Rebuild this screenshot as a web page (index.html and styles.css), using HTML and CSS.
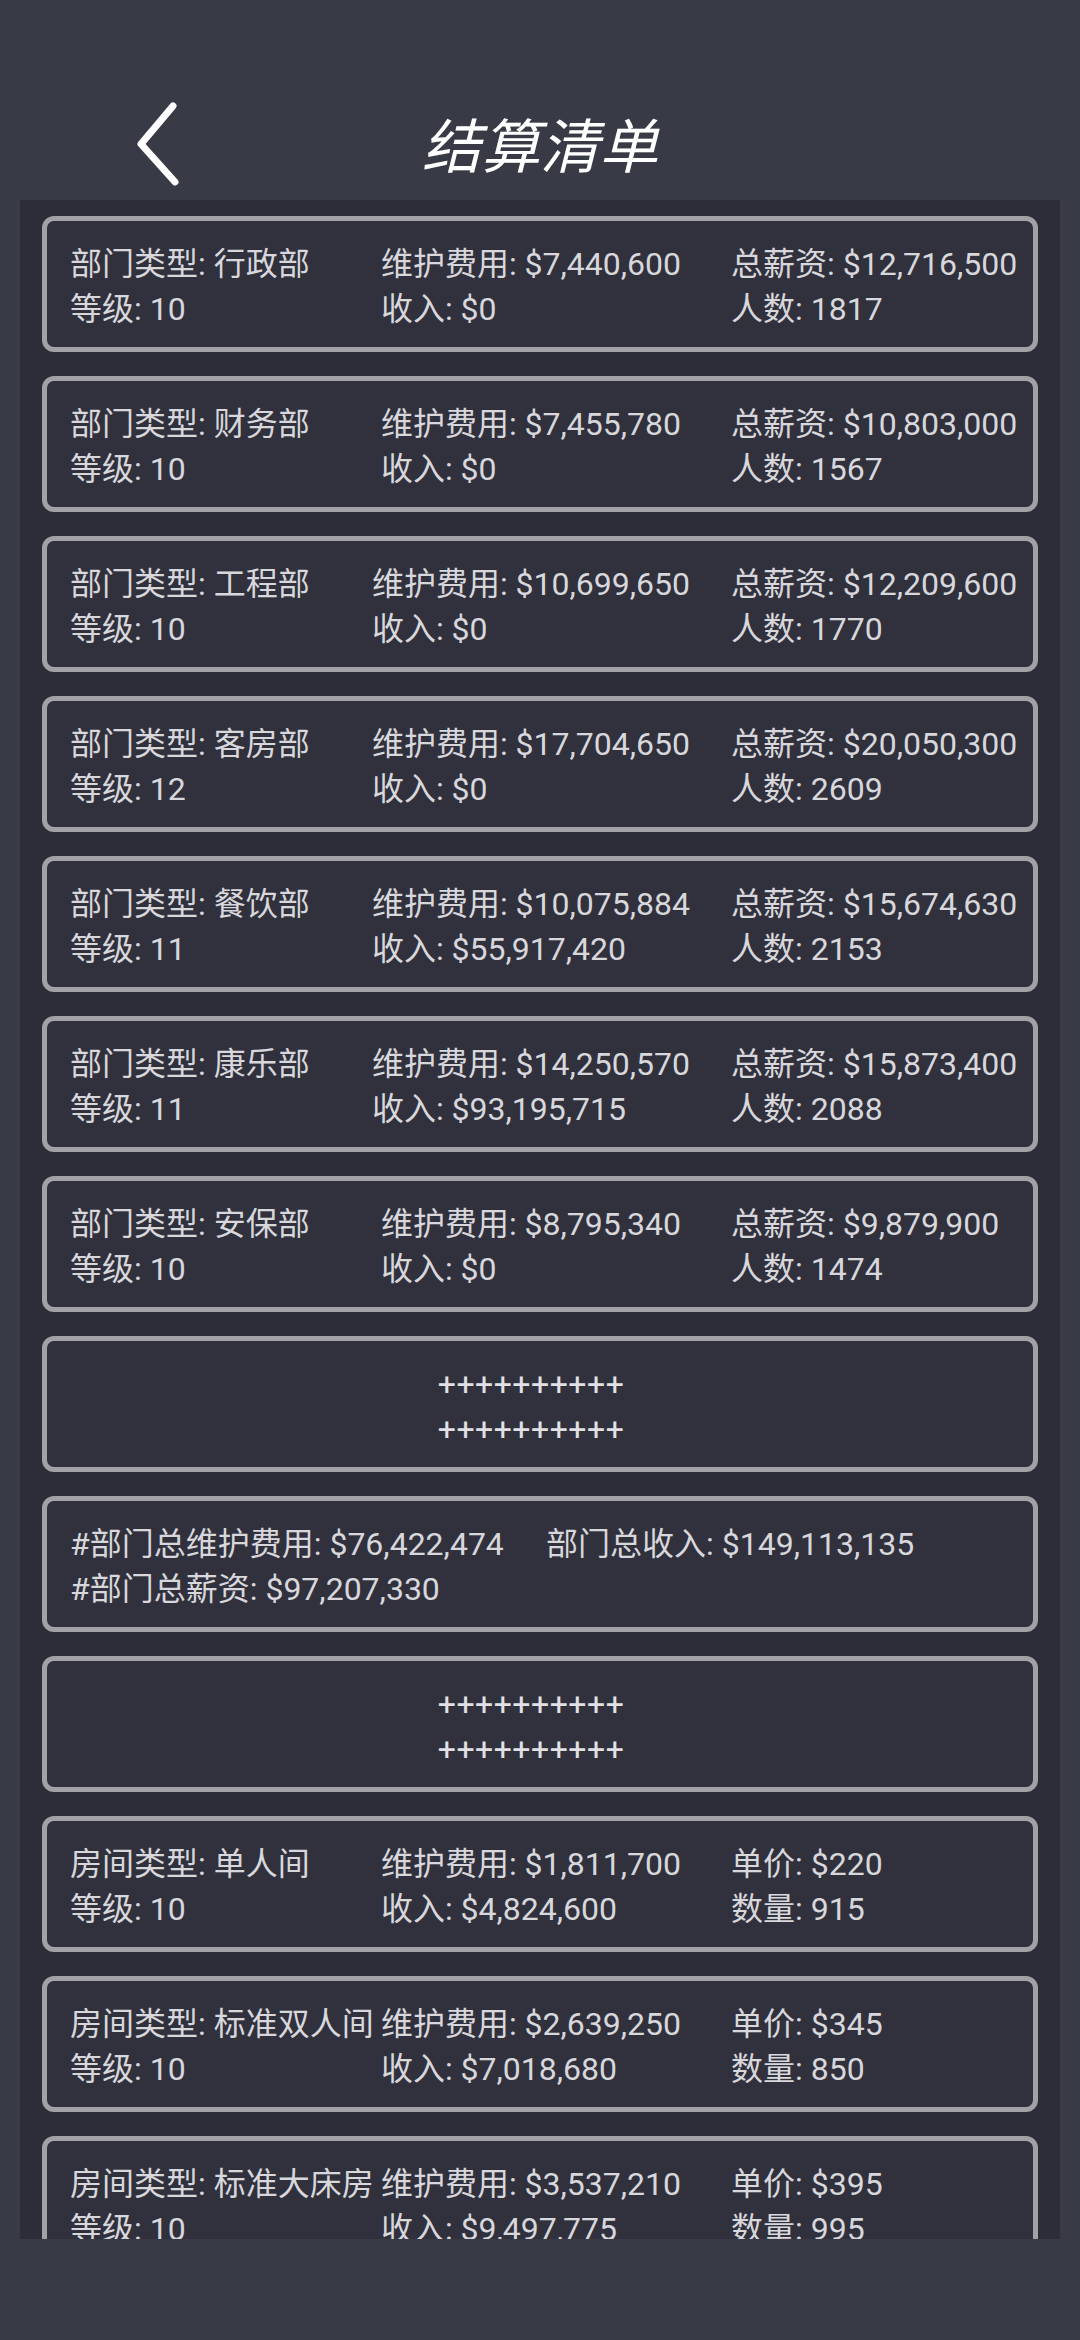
FILE: index.html
```html
<!DOCTYPE html>
<html lang="zh-CN">
<head>
  <meta charset="UTF-8">
  <meta name="viewport" content="width=device-width, initial-scale=1.0">
  <title>结算清单</title>
  <link rel="stylesheet" href="styles.css">
</head>
<body>
  <header class="topbar">
    <div class="back">
      <svg width="56" height="96" viewBox="0 0 56 96">
        <polyline points="42,12 10,50 44,88" fill="none" stroke="#ffffff" stroke-width="7" stroke-linecap="round" stroke-linejoin="round"/>
      </svg>
    </div>
    <h1>结算清单</h1>
    <div></div>
  </header>

  <div class="panel">
    <div class="card">
      <div class="cols">
        <div class="col"><p>部门类型: 行政部</p><p>等级: 10</p></div>
        <div class="col mid"><p>维护费用: $7,440,600</p><p>收入: $0</p></div>
        <div class="col"><p>总薪资: $12,716,500</p><p>人数: 1817</p></div>
      </div>
    </div>
    <div class="card">
      <div class="cols">
        <div class="col"><p>部门类型: 财务部</p><p>等级: 10</p></div>
        <div class="col mid"><p>维护费用: $7,455,780</p><p>收入: $0</p></div>
        <div class="col"><p>总薪资: $10,803,000</p><p>人数: 1567</p></div>
      </div>
    </div>
    <div class="card">
      <div class="cols">
        <div class="col"><p>部门类型: 工程部</p><p>等级: 10</p></div>
        <div class="col mid"><p>维护费用: $10,699,650</p><p>收入: $0</p></div>
        <div class="col"><p>总薪资: $12,209,600</p><p>人数: 1770</p></div>
      </div>
    </div>
    <div class="card">
      <div class="cols">
        <div class="col"><p>部门类型: 客房部</p><p>等级: 12</p></div>
        <div class="col mid"><p>维护费用: $17,704,650</p><p>收入: $0</p></div>
        <div class="col"><p>总薪资: $20,050,300</p><p>人数: 2609</p></div>
      </div>
    </div>
    <div class="card">
      <div class="cols">
        <div class="col"><p>部门类型: 餐饮部</p><p>等级: 11</p></div>
        <div class="col mid"><p>维护费用: $10,075,884</p><p>收入: $55,917,420</p></div>
        <div class="col"><p>总薪资: $15,674,630</p><p>人数: 2153</p></div>
      </div>
    </div>
    <div class="card">
      <div class="cols">
        <div class="col"><p>部门类型: 康乐部</p><p>等级: 11</p></div>
        <div class="col mid"><p>维护费用: $14,250,570</p><p>收入: $93,195,715</p></div>
        <div class="col"><p>总薪资: $15,873,400</p><p>人数: 2088</p></div>
      </div>
    </div>
    <div class="card">
      <div class="cols">
        <div class="col"><p>部门类型: 安保部</p><p>等级: 10</p></div>
        <div class="col mid"><p>维护费用: $8,795,340</p><p>收入: $0</p></div>
        <div class="col"><p>总薪资: $9,879,900</p><p>人数: 1474</p></div>
      </div>
    </div>

    <div class="card">
      <div class="cols">
        <div class="col"></div>
        <div class="col mid plus"><p>++++++++++</p><p>++++++++++</p></div>
        <div class="col"></div>
      </div>
    </div>

    <div class="card">
      <div class="totals">
        <p>#部门总维护费用: $76,422,474</p>
        <p>部门总收入: $149,113,135</p>
        <p>#部门总薪资: $97,207,330</p>
      </div>
    </div>

    <div class="card">
      <div class="cols">
        <div class="col"></div>
        <div class="col mid plus"><p>++++++++++</p><p>++++++++++</p></div>
        <div class="col"></div>
      </div>
    </div>

    <div class="card">
      <div class="cols">
        <div class="col"><p>房间类型: 单人间</p><p>等级: 10</p></div>
        <div class="col mid"><p>维护费用: $1,811,700</p><p>收入: $4,824,600</p></div>
        <div class="col"><p>单价: $220</p><p>数量: 915</p></div>
      </div>
    </div>
    <div class="card">
      <div class="cols">
        <div class="col"><p>房间类型: 标准双人间</p><p>等级: 10</p></div>
        <div class="col mid"><p>维护费用: $2,639,250</p><p>收入: $7,018,680</p></div>
        <div class="col"><p>单价: $345</p><p>数量: 850</p></div>
      </div>
    </div>
    <div class="card">
      <div class="cols">
        <div class="col"><p>房间类型: 标准大床房</p><p>等级: 10</p></div>
        <div class="col mid"><p>维护费用: $3,537,210</p><p>收入: $9,497,775</p></div>
        <div class="col"><p>单价: $395</p><p>数量: 995</p></div>
      </div>
    </div>
  </div>
</body>
</html>
```

FILE: styles.css
```css
body {
  margin: 0;
  width: 1080px;
  height: 2340px;
  background-color: #383b46;
  font-family: Roboto, "Noto Sans CJK SC", sans-serif;
  overflow: hidden;
}
p {
  margin: 0;
}
.topbar {
  height: 200px;
  box-sizing: border-box;
  padding-top: 84px;
  display: grid;
  grid-template-columns: 1fr auto 1fr;
  align-items: center;
}
.back {
  padding-left: 131px;
  display: flex;
  align-items: center;
}
.back svg {
  display: block;
}
.topbar h1 {
  margin: 0;
  font-family: "Noto Sans CJK SC", sans-serif;
  font-size: 59px;
  font-weight: 400;
  font-style: italic;
  color: #ffffff;
  line-height: 1;
}
.panel {
  margin: 0 20px;
  height: 2039px;
  box-sizing: border-box;
  padding: 16px 22px 0 22px;
  background-color: #2c2d38;
  overflow: hidden;
}
.card {
  height: 136px;
  box-sizing: border-box;
  margin-bottom: 24px;
  border: 5px solid #a2a2a6;
  border-radius: 12px;
  background-color: #31313d;
  padding: 5px 0 0 23px;
  display: flex;
  flex-direction: column;
  justify-content: center;
  color: #d7d7dc;
  font-size: 32px;
  line-height: 45px;
  white-space: nowrap;
}
.cols {
  display: grid;
  grid-template-columns: 261px 360px 1fr;
  column-gap: 20px;
}
.col.mid {
  justify-self: center;
}
.plus {
  text-align: center;
  color: #e0e0e4;
  letter-spacing: 0.5px;
}
.totals {
  display: grid;
  grid-template-columns: 476px 1fr;
}
```
